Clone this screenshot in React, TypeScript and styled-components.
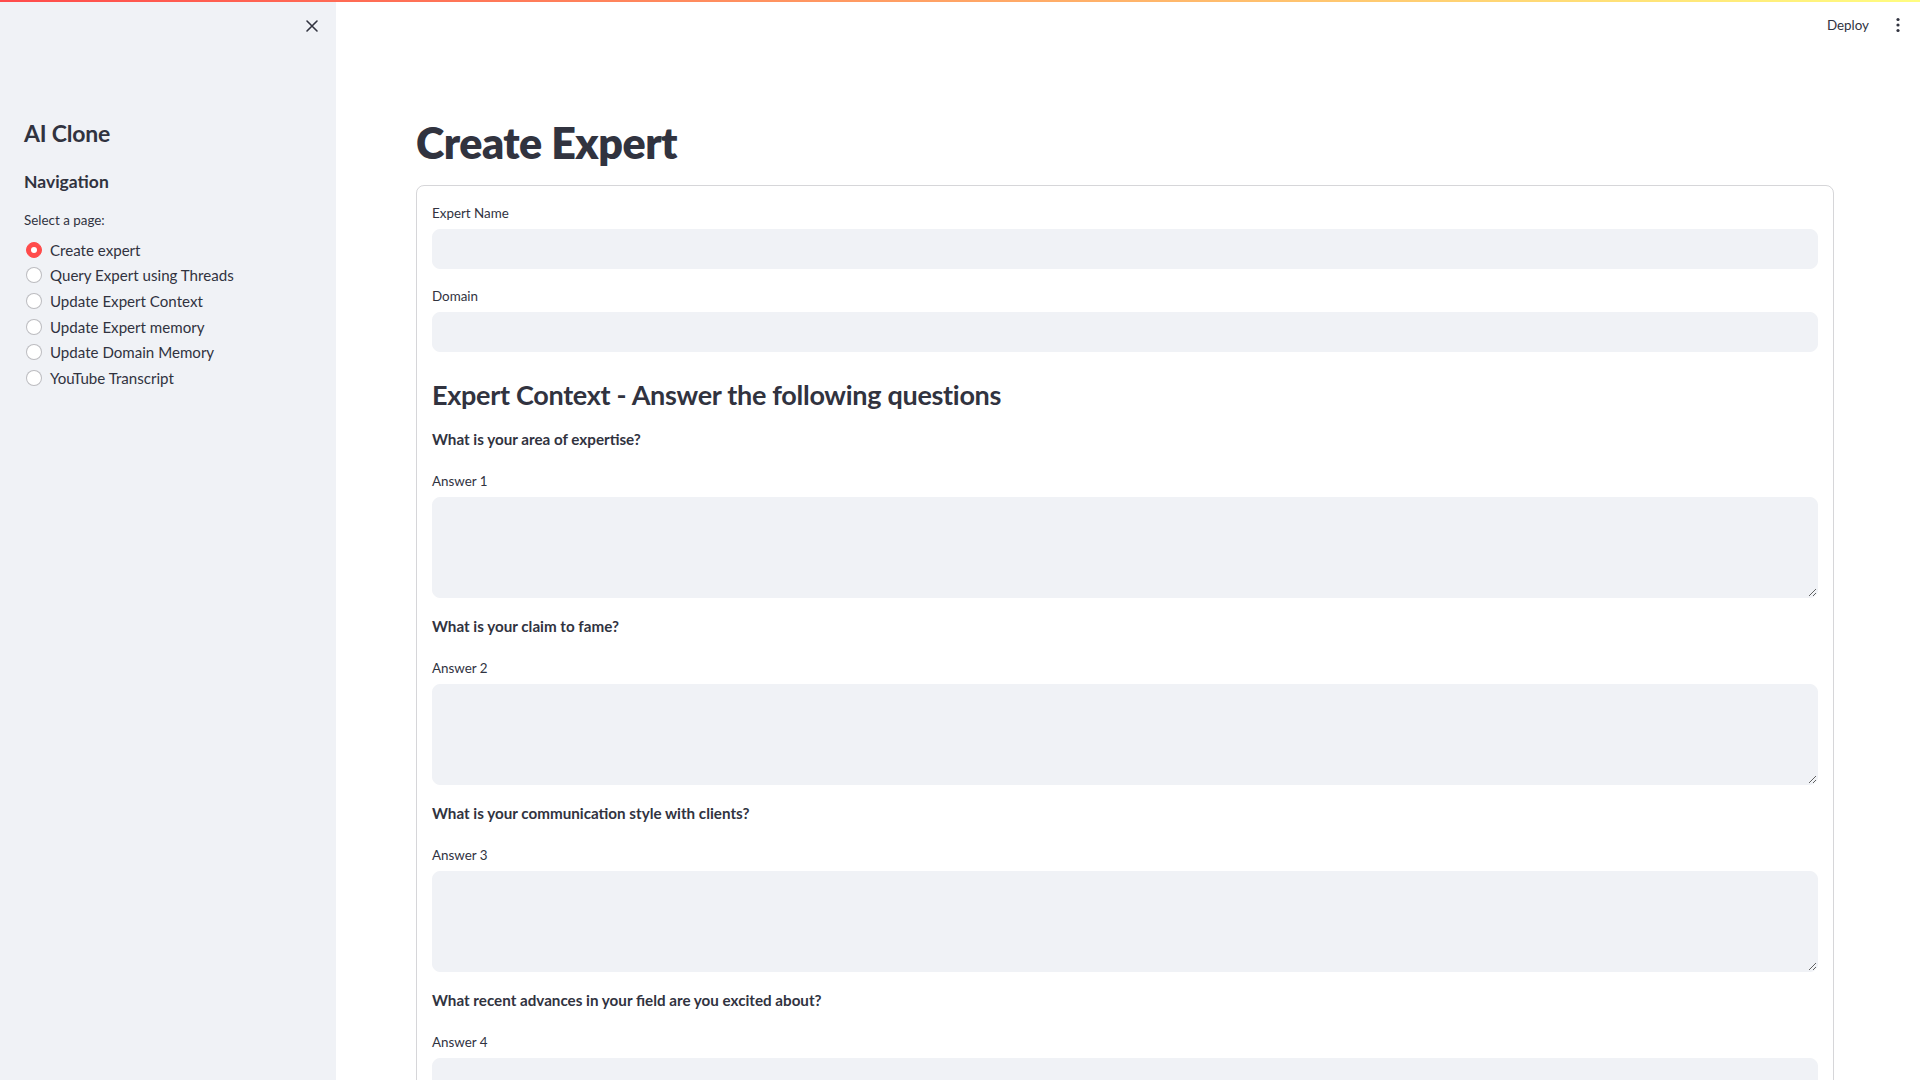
import React from "react";
import styled, { createGlobalStyle } from "styled-components";

const GlobalStyle = createGlobalStyle`
  html, body {
    margin: 0;
    padding: 0;
    height: 100%;
    overflow: hidden;
    background: #ffffff;
  }
  body {
    font-family: Lato, "Noto Sans", sans-serif;
    color: #31333f;
    -webkit-font-smoothing: antialiased;
  }
  * { box-sizing: border-box; }
`;

const AppShell = styled.div`
  position: relative;
  display: flex;
  width: 100vw;
  height: 100vh;
  overflow: hidden;
`;

const Decoration = styled.div`
  position: absolute;
  top: 0;
  left: 0;
  right: 0;
  height: 2px;
  background: linear-gradient(90deg, #ff4b4b, #fffd80);
  z-index: 10;
`;

const Sidebar = styled.aside`
  flex: 0 0 336px;
  height: 100%;
  background: #f0f2f6;
  display: flex;
  flex-direction: column;
  padding: 0 24px;
`;

const SidebarHeader = styled.div`
  height: 50px;
  display: flex;
  justify-content: flex-end;
  align-items: center;
  padding-top: 2px;
  margin-right: -14px;
`;

const CloseButton = styled.button`
  width: 28px;
  height: 28px;
  border: none;
  background: transparent;
  display: flex;
  align-items: center;
  justify-content: center;
  padding: 0;
  color: #31333f;
  cursor: pointer;
`;

const SideTitle = styled.h1`
  margin: 65px 0 0;
  font-size: 23px;
  line-height: 36px;
  font-weight: 700;
  letter-spacing: -0.2px;
`;

const SideHeading = styled.h2`
  margin: 17px 0 0;
  font-size: 17.5px;
  line-height: 28px;
  font-weight: 700;
`;

const SmallLabel = styled.div`
  margin: 13px 0 0;
  font-size: 13.4px;
  line-height: 22px;
`;

const RadioGroup = styled.div`
  margin-top: 6px;
  display: flex;
  flex-direction: column;
`;

const RadioRow = styled.label`
  display: flex;
  align-items: center;
  height: 25.6px;
  gap: 8px;
  font-size: 15.1px;
  cursor: pointer;
`;

const RadioDot = styled.span<{ $checked?: boolean }>`
  flex: 0 0 16px;
  width: 16px;
  height: 16px;
  margin-left: 2px;
  border-radius: 50%;
  background: ${(p) => (p.$checked ? "#ff4b4b" : "#ffffff")};
  border: 1px solid ${(p) => (p.$checked ? "#ff4b4b" : "rgba(49,51,63,0.32)")};
  display: flex;
  align-items: center;
  justify-content: center;
  &::after {
    content: "";
    display: ${(p) => (p.$checked ? "block" : "none")};
    width: 6px;
    height: 6px;
    border-radius: 50%;
    background: #ffffff;
  }
`;

const Main = styled.main`
  position: relative;
  flex: 1;
  height: 100%;
  overflow: hidden;
`;

const TopBar = styled.header`
  position: absolute;
  top: 0;
  right: 0;
  height: 50px;
  display: flex;
  align-items: center;
  gap: 27px;
  padding-right: 20px;
`;

const DeployText = styled.span`
  font-size: 13.4px;
  color: #31333f;
`;

const MenuButton = styled.span`
  display: flex;
  align-items: center;
  color: #31333f;
`;

const Block = styled.div`
  padding: 119px 86px 0 80px;
  display: flex;
  flex-direction: column;
`;

const PageTitle = styled.h1`
  margin: 0 0 18px;
  font-size: 43px;
  line-height: 48px;
  font-weight: 800;
  letter-spacing: -0.5px;
`;

const FormBox = styled.div`
  border: 1px solid rgba(49, 51, 63, 0.2);
  border-radius: 8px;
  padding: 16px 15px 16px;
  display: flex;
  flex-direction: column;
  gap: 16px;
`;

const Field = styled.div`
  display: flex;
  flex-direction: column;
`;

const FieldLabel = styled.label`
  font-size: 13.4px;
  line-height: 22px;
  margin-bottom: 5px;
`;

const TextInput = styled.input`
  height: 40px;
  width: 100%;
  border: 1px solid #f0f2f6;
  border-radius: 8px;
  background: #f0f2f6;
  padding: 0 12px;
  font: inherit;
  outline: none;
`;

const TextArea = styled.textarea`
  height: 101px;
  width: 100%;
  border: 1px solid #f0f2f6;
  border-radius: 8px;
  background: #f0f2f6;
  padding: 12px;
  font: inherit;
  outline: none;
  resize: vertical;
  display: block;
`;

const SectionHeading = styled.h3`
  margin: 0;
  padding-top: 10px;
  font-size: 27px;
  line-height: 33px;
  font-weight: 700;
  letter-spacing: -0.3px;
`;

const Question = styled.p`
  margin: 0;
  padding-bottom: 2px;
  font-size: 15.2px;
  line-height: 25px;
  font-weight: 700;
`;

const pages = [
  "Create expert",
  "Query Expert using Threads",
  "Update Expert Context",
  "Update Expert memory",
  "Update Domain Memory",
  "YouTube Transcript",
];

const questions = [
  "What is your area of expertise?",
  "What is your claim to fame?",
  "What is your communication style with clients?",
  "What recent advances in your field are you excited about?",
];

export default function App() {
  return (
    <>
      <GlobalStyle />
      <AppShell>
        <Decoration />
        <Sidebar>
          <SidebarHeader>
            <CloseButton aria-label="Close sidebar">
              <svg width="14" height="14" viewBox="0 0 14 14">
                <path d="M2 2 L12 12 M12 2 L2 12" stroke="#31333f" strokeWidth="1.6" strokeLinecap="round" />
              </svg>
            </CloseButton>
          </SidebarHeader>
          <SideTitle>AI Clone</SideTitle>
          <SideHeading>Navigation</SideHeading>
          <SmallLabel>Select a page:</SmallLabel>
          <RadioGroup>
            {pages.map((p, i) => (
              <RadioRow key={p}>
                <RadioDot $checked={i === 0} />
                {p}
              </RadioRow>
            ))}
          </RadioGroup>
        </Sidebar>
        <Main>
          <TopBar>
            <DeployText>Deploy</DeployText>
            <MenuButton>
              <svg width="4" height="16" viewBox="0 0 4 16">
                <circle cx="2" cy="2.5" r="1.6" fill="#31333f" />
                <circle cx="2" cy="8" r="1.6" fill="#31333f" />
                <circle cx="2" cy="13.5" r="1.6" fill="#31333f" />
              </svg>
            </MenuButton>
          </TopBar>
          <Block>
            <PageTitle>Create Expert</PageTitle>
            <FormBox>
              <Field>
                <FieldLabel>Expert Name</FieldLabel>
                <TextInput />
              </Field>
              <Field>
                <FieldLabel>Domain</FieldLabel>
                <TextInput />
              </Field>
              <SectionHeading>Expert Context - Answer the following questions</SectionHeading>
              {questions.map((q, i) => (
                <React.Fragment key={q}>
                  <Question>{q}</Question>
                  <Field>
                    <FieldLabel>Answer {i + 1}</FieldLabel>
                    <TextArea />
                  </Field>
                </React.Fragment>
              ))}
            </FormBox>
          </Block>
        </Main>
      </AppShell>
    </>
  );
}
